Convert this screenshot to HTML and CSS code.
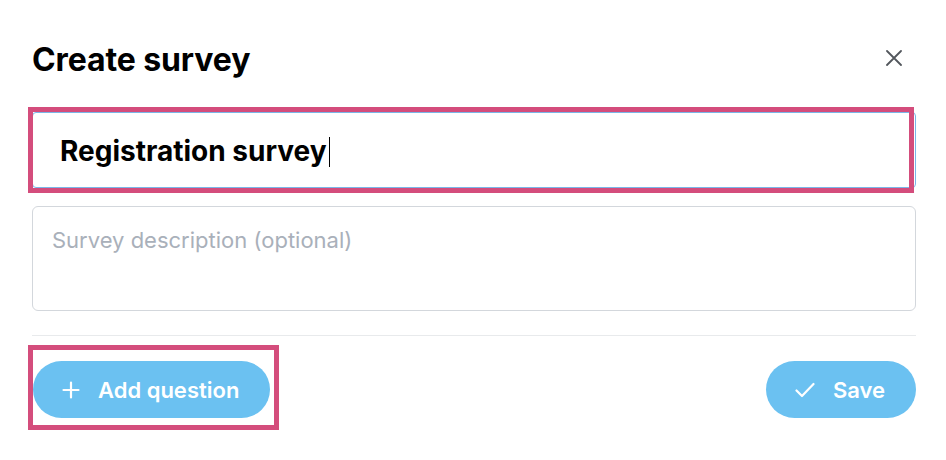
FILE: index.html
```html
<!DOCTYPE html>
<html lang="en">
<head>
<meta charset="utf-8">
<title>Create survey</title>
<link rel="stylesheet" href="styles.css">
</head>
<body>
<div class="dialog">
  <div class="header">
    <h1 class="title">Create survey</h1>
    <button class="close" aria-label="Close">
      <svg width="16" height="16" viewBox="0 0 16 16"><path d="M1 1L15 15M15 1L1 15" stroke="#53575d" stroke-width="1.8" stroke-linecap="round"/></svg>
    </button>
  </div>
  <div class="field-wrap">
    <div class="title-input"><span class="value">Registration survey</span><span class="caret"></span></div>
    <div class="highlight hl-title"></div>
  </div>
  <div class="desc">Survey description (optional)</div>
  <div class="divider"></div>
  <div class="actions">
    <div class="btn-wrap">
      <button class="btn">
        <svg width="18" height="18" viewBox="0 0 18 18"><path d="M9 1.5V16.5M1.5 9H16.5" stroke="#fff" stroke-width="2.2" stroke-linecap="round"/></svg>
        <span>Add question</span>
      </button>
      <div class="highlight hl-btn"></div>
    </div>
    <button class="btn">
      <svg width="20" height="16" viewBox="0 0 20 16"><path d="M1.5 8.5L7 14L18.5 2" stroke="#fff" stroke-width="2.2" fill="none" stroke-linecap="round" stroke-linejoin="round"/></svg>
      <span>Save</span>
    </button>
  </div>
</div>
</body>
</html>
```
FILE: styles.css
```css
* { box-sizing: border-box; }
html, body { margin: 0; padding: 0; background: #fff; }
body { font-family: Inter, "Noto Sans", sans-serif; color: #000; }
.dialog { width: 946px; min-height: 460px; padding: 40px 30px 0 32px; }
.header { display: flex; align-items: center; justify-content: space-between; height: 40px; }
.title { margin: 0; font-size: 32px; line-height: 40px; font-weight: 700; letter-spacing: -0.1px; }
.close { background: none; border: 0; padding: 0; margin-right: 14px; margin-top: -4px; width: 16px; height: 16px; display: flex; }
.field-wrap { position: relative; margin-top: 32px; }
.title-input { height: 76px; border: 1px solid #7ab6e8; border-radius: 4px; padding: 2px 0 0 27px; display: flex; align-items: center; font-size: 28px; font-weight: 700; }
.caret { display: inline-block; width: 1.5px; height: 30px; background: #000; margin-left: 2px; margin-top: 2px; }
.highlight { position: absolute; border: 5px solid #d44d7c; }
.hl-title { left: -4px; top: -5px; width: 886px; height: 86px; }
.desc { margin-top: 18px; height: 105px; border: 1px solid #d3d7dc; border-radius: 6px; padding: 20px 19px; font-size: 22px; line-height: 26px; color: #a9b0ba; }
.divider { margin-top: 24px; height: 1px; background: #e8eaec; }
.actions { display: flex; justify-content: space-between; margin-top: 25px; }
.btn-wrap { position: relative; margin-left: 1px; }
.btn { height: 57px; border: 0; border-radius: 29px; background: #6bc1f1; color: #fff; display: flex; align-items: center; gap: 18px; padding: 0 31px 0 29px; font-family: Inter, "Noto Sans", sans-serif; font-size: 22px; font-weight: 600; }
.hl-btn { left: -5px; top: -16px; width: 251px; height: 85px; }
```
